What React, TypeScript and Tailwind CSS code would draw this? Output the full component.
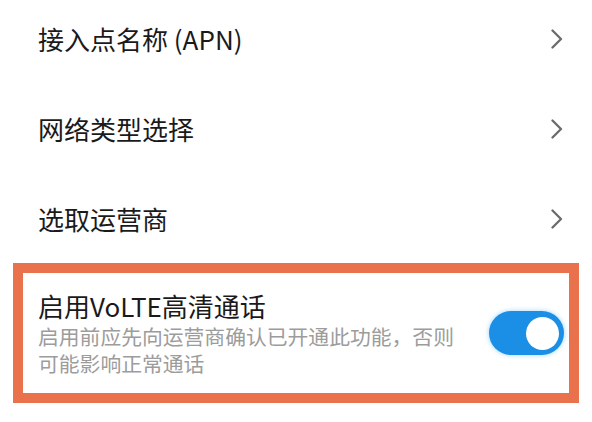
import React, { useState } from 'react';

const font = { fontFamily: '"Noto Sans CJK SC", "Noto Sans", sans-serif' };

function Chevron() {
  return (
    <svg width="12" height="20" viewBox="0 0 12 20" fill="none">
      <polyline points="1.5,1.5 10,10 1.5,18.5" stroke="#6b6b6b" strokeWidth="2.3" strokeLinecap="round" strokeLinejoin="round" />
    </svg>
  );
}

const rows = ['接入点名称 (APN)', '网络类型选择', '选取运营商'];

export default function App() {
  const [on, setOn] = useState(true);

  return (
    <div className="w-[592px] h-[422px] bg-white overflow-hidden font-['Noto_Sans_CJK_SC',sans-serif]">
      <div className="-mt-[6px]">
        {rows.map((r) => (
          <div key={r} className="h-[90px] flex items-center justify-between pl-[38px] pr-[29px]">
            <span className="text-[26px] leading-[34px] text-[#1a1a1a]">{r}</span>
            <Chevron />
          </div>
        ))}
      </div>
      <div className="mx-[13px] -mt-[1px] border-[10px] border-[#e9714c] h-[140px] flex items-center pl-[15px] pr-[5px]">
        <div className="flex-1 pr-[18px]">
          <p className="text-[26px] leading-[34px] text-[#1a1a1a]">启用VoLTE高清通话</p>
          <p className="text-[20.8px] leading-[27px] text-[#9c9c9c]">启用前应先向运营商确认已开通此功能，否则可能影响正常通话</p>
        </div>
        <button
          onClick={() => setOn(!on)}
          className={`w-[75px] h-[44px] rounded-full flex items-center px-[5px] shadow-[0_0_5px_rgba(40,160,240,0.45)] ${on ? 'bg-[#1b8ee6] justify-end' : 'bg-[#cccccc] justify-start'}`}
        >
          <span className="w-[33px] h-[33px] rounded-full bg-white block" />
        </button>
      </div>
    </div>
  );
}
